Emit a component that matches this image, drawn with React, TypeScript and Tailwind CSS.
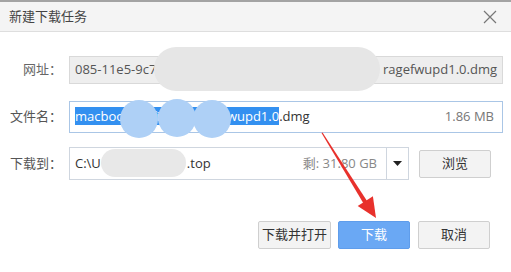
const font = { fontFamily: '"Open Sans", "Noto Sans CJK SC", sans-serif' };

function Btn({ label, primary, w }: { label: string; primary?: boolean; w: string }) {
  return (
    <button
      className={
        primary
          ? `flex h-[28px] ${w} items-center justify-center rounded-[2px] border border-[#5f9deb] bg-[#6aa8f4] text-[13px] text-white`
          : `flex h-[28px] ${w} items-center justify-center rounded-[2px] border border-[#cfcfcf] bg-[#f3f3f3] text-[13px] text-[#333]`
      }
    >
      {label}
    </button>
  );
}

export default function App() {
  return (
    <div className="relative h-[272px] w-[511px] overflow-hidden bg-white" style={font}>
      {/* title bar */}
      <div className="flex h-[32px] items-center justify-between border-t-2 border-b border-t-[#a3a3a3] border-b-[#dedede] bg-[#f4f4f4] pl-[9px] pr-[14px]">
        <span className="text-[13px] text-[#444]">新建下载任务</span>
        <svg width="14" height="14" viewBox="0 0 14 14" className="text-[#777]">
          <path d="M1 1L13 13M13 1L1 13" stroke="currentColor" strokeWidth="1.2" />
        </svg>
      </div>

      <div className="flex flex-col pr-[8px]">
        {/* url */}
        <div className="mt-[24px] flex items-center">
          <span className="w-[62px] text-right text-[13px] text-[#666]">网址：</span>
          <div className="relative ml-[7px] flex h-[28px] flex-1 items-center justify-between border border-[#d9d9d9] bg-[#eeeeee] px-[5px] text-[13px] text-[#555]">
            <span>085-11e5-9c7</span>
            <span>ragefwupd1.0.dmg</span>
            <div className="absolute left-[84px] top-[-10px] h-[44px] w-[226px] rounded-[22px] bg-[#e6e6e6]" />
          </div>
        </div>

        {/* file name */}
        <div className="mt-[17px] flex items-center">
          <span className="w-[62px] text-right text-[13px] text-[#555]">文件名：</span>
          <div className="relative ml-[7px] flex h-[32px] flex-1 items-center justify-between border border-[#aac6e6] bg-white pl-[5px] pr-[8px] text-[13px] text-[#333]">
            <span>
              <span className="bg-[#3390f0] text-white">macbookprofirmstoragefwupd1.0</span>.dmg
            </span>
            <span className="text-[#777]">1.86 MB</span>
            <div className="absolute left-[50px] top-[-2px] h-[38px] w-[38px] rounded-full bg-[#aed0f6]" />
            <div className="absolute left-[88px] top-[-3px] h-[38px] w-[38px] rounded-full bg-[#aed0f6]" />
            <div className="absolute left-[123px] top-[-2px] h-[38px] w-[38px] rounded-full bg-[#aed0f6]" />
          </div>
        </div>

        {/* save path */}
        <div className="mt-[14px] flex items-center">
          <span className="w-[62px] text-right text-[13px] text-[#555]">下载到：</span>
          <div className="relative ml-[7px] flex h-[33px] w-[340px] items-center border border-[#cfd6df] bg-white text-[13px]">
            <div className="flex flex-1 items-center justify-between pl-[5px] pr-[9px]">
              <span className="text-[#333]">
                C:\U<span className="inline-block w-[86px]" />.top
              </span>
              <span className="text-[#888]">剩: 31.80 GB</span>
            </div>
            <div className="flex h-full w-[22px] items-center justify-center border-l border-[#cfd6df]">
              <svg width="9" height="5" viewBox="0 0 9 5">
                <path d="M0 0H9L4.5 5Z" fill="#222" />
              </svg>
            </div>
            <div className="absolute left-[31px] top-[1px] h-[28px] w-[85px] rounded-[14px] bg-[#e8e8e8]" />
          </div>
          <div className="ml-[10px]">
            <Btn label="浏览" w="w-[72px]" />
          </div>
        </div>

        {/* actions */}
        <div className="mt-[41px] flex justify-end gap-[7px] pr-[13px]">
          <Btn label="下载并打开" w="w-[73px]" />
          <Btn label="下载" primary w="w-[72px]" />
          <div className="ml-[1px]">
            <Btn label="取消" w="w-[72px]" />
          </div>
        </div>
      </div>

      {/* red arrow annotation */}
      <svg className="pointer-events-none absolute left-0 top-0" width="511" height="272">
        <polygon points="321.5,133 322.5,132.6 367.2,201.2 363.4,203.3" fill="#e8312c" />
        <polygon points="376,218 357.7,205.9 372.9,196.3" fill="#e8312c" />
      </svg>
    </div>
  );
}
